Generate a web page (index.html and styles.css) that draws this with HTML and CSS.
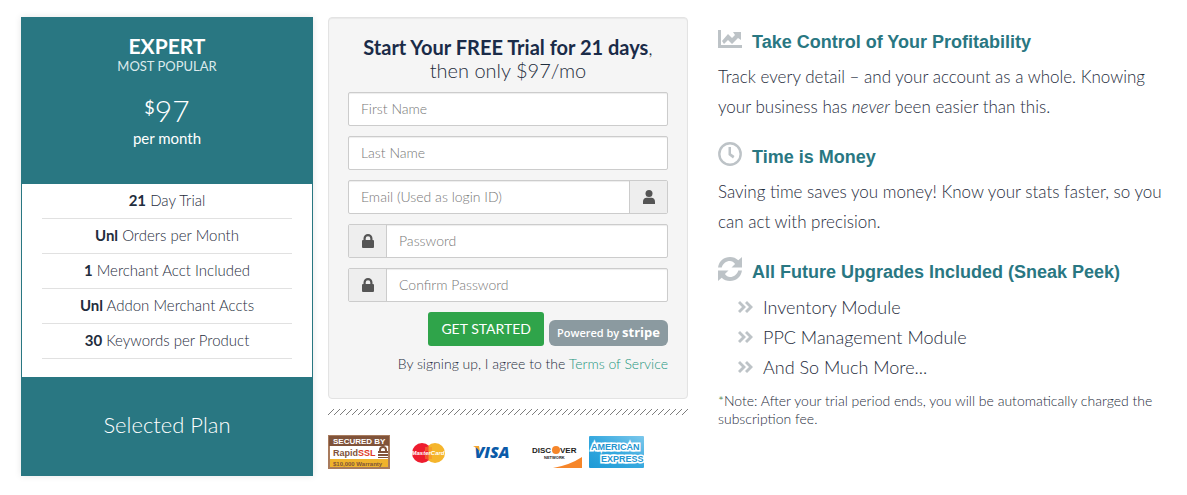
FILE: index.html
```html
<!DOCTYPE html>
<html lang="en">
<head>
  <meta charset="UTF-8" />
  <meta name="viewport" content="width=device-width, initial-scale=1.0" />
  <title>Start Your Free Trial</title>
  <link rel="stylesheet" href="styles.css">
</head>
<body>
  <main class="signup">

    <section class="plan">
      <div class="plan-header">
        <h2>EXPERT</h2>
        <p class="plan-tag">MOST POPULAR</p>
        <p class="plan-price"><sup>$</sup>97</p>
        <p class="plan-period">per month</p>
      </div>
      <ul class="plan-features">
        <li><strong>21</strong> Day Trial</li>
        <li><strong>Unl</strong> Orders per Month</li>
        <li><strong>1</strong> Merchant Acct Included</li>
        <li><strong>Unl</strong> Addon Merchant Accts</li>
        <li><strong>30</strong> Keywords per Product</li>
      </ul>
      <div class="plan-footer">Selected Plan</div>
    </section>

    <section class="middle">
      <form class="well">
        <h3><strong>Start Your FREE Trial for 21 days</strong>,<br>then only $97/mo</h3>
        <div class="field">
          <input type="text" placeholder="First Name" aria-label="First Name" />
        </div>
        <div class="field">
          <input type="text" placeholder="Last Name" aria-label="Last Name" />
        </div>
        <div class="field">
          <input type="email" id="email" placeholder="Email (Used as login ID)" aria-label="Email" />
          <label class="addon addon-right" for="email">
            <svg width="14" height="14" viewBox="0 0 14 14"><circle cx="7" cy="3.500" r="3.500"/><path d="M1 14V11.500C1 9.200 2.600 7.800 4.500 7.800H9.500C11.400 7.800 13 9.200 13 11.500V14Z"/></svg>
          </label>
        </div>
        <div class="field">
          <label class="addon addon-left" for="password">
            <svg width="14" height="14" viewBox="0 0 14 14"><path fill-rule="evenodd" d="M2.500 6V4.500a4.500 4.500 0 0 1 9 0V6h.5a1 1 0 0 1 1 1v6a1 1 0 0 1-1 1H2a1 1 0 0 1-1-1V7a1 1 0 0 1 1-1ZM4.700 6h4.600V4.500a2.300 2.300 0 0 0-4.600 0Z"/></svg>
          </label>
          <input type="password" id="password" placeholder="Password" aria-label="Password" />
        </div>
        <div class="field">
          <label class="addon addon-left" for="confirm">
            <svg width="14" height="14" viewBox="0 0 14 14"><path fill-rule="evenodd" d="M2.500 6V4.500a4.500 4.500 0 0 1 9 0V6h.5a1 1 0 0 1 1 1v6a1 1 0 0 1-1 1H2a1 1 0 0 1-1-1V7a1 1 0 0 1 1-1ZM4.700 6h4.600V4.500a2.300 2.300 0 0 0-4.600 0Z"/></svg>
          </label>
          <input type="password" id="confirm" placeholder="Confirm Password" aria-label="Confirm Password" />
        </div>
        <div class="actions">
          <button type="submit">GET STARTED</button>
          <span class="stripe">Powered by <b>stripe</b></span>
        </div>
        <p class="terms">By signing up, I agree to the <a href="#">Terms of Service</a></p>
      </form>

      <svg class="hatch" height="6" aria-hidden="true">
        <defs>
          <pattern id="slashes" width="6" height="6" patternUnits="userSpaceOnUse">
            <path d="M0 5h1v1H0zM1 4h1v1H1zM2 3h1v1H2zM3 2h1v1H3zM4 1h1v1H4zM5 0h1v1H5z" fill="#7d7d7d"/>
          </pattern>
        </defs>
        <rect width="100%" height="6" fill="url(#slashes)"/>
      </svg>

      <div class="badges">
        <!-- RapidSSL -->
        <svg width="62" height="34" viewBox="0 0 62 34">
          <rect x="1" y="1" width="60" height="32" fill="#fff" stroke="#a87b5d" stroke-width="2"/>
          <path d="M1 1h60v10q-4-1-5 0H1z" fill="#80533a"/>
          <rect x="2" y="24" width="58" height="8" fill="#efb32c"/>
          <text x="5" y="9" class="ssl-top">SECURED BY</text>
          <text x="5" y="21" class="ssl-name">Rapid<tspan fill="#e03a26">SSL</tspan></text>
          <path d="M52 17v-2a3 3 0 0 1 6 0v2" fill="none" stroke="#80533a" stroke-width="2"/>
          <path d="M50 16h10v2H50zM50 19h10v2H50zM50 22h10v1H50z" fill="#80533a"/>
          <text x="5" y="31" class="ssl-bottom">$10,000 Warranty</text>
        </svg>
        <!-- MasterCard -->
        <svg width="62" height="34" viewBox="0 0 62 34">
          <circle cx="30" cy="18" r="10" fill="#ee1c2e"/>
          <circle cx="43" cy="18" r="10" fill="#f5b52c"/>
          <path d="M36.500 10.400v15.200a10 10 0 0 1 0-15.200" fill="#ee1c2e"/>
          <path d="M33 13h7M33 15h7M33 21h7M33 23h7" stroke="#f5872c"/>
          <text x="36" y="20" class="mc">MasterCard</text>
        </svg>
        <!-- Visa -->
        <svg width="62" height="34" viewBox="0 0 62 34">
          <text x="36" y="23" class="visa">VISA</text>
          <path d="M17 11h6l1 6q-2-4-7-6" fill="#f5a52c"/>
        </svg>
        <!-- Discover -->
        <svg width="62" height="34" viewBox="0 0 62 34">
          <circle cx="36" cy="15" r="4" fill="#f6862a"/>
          <text x="12" y="18" class="disc">DISC</text>
          <text x="40" y="18" class="disc">VER</text>
          <text x="24" y="24" class="disc-sub">NETWORK</text>
          <path d="M33 33Q50 30 62 22v11z" fill="#f6862a"/>
        </svg>
        <!-- American Express -->
        <svg width="62" height="34" viewBox="0 0 62 34">
          <defs>
            <linearGradient id="amex" x1="0" y1="1" x2="1" y2="0">
              <stop offset="0" stop-color="#1d9ad6"/>
              <stop offset=".5" stop-color="#37a9df"/>
              <stop offset="1" stop-color="#7cc8ec"/>
            </linearGradient>
          </defs>
          <rect x="5" y="1" width="55" height="32" rx="1" fill="url(#amex)"/>
          <text x="7" y="15" class="amex">AMERICAN</text>
          <text x="17" y="27" class="amex">EXPRESS</text>
        </svg>
      </div>
    </section>

    <section class="benefits">
      <h4>
        <svg width="24" height="24" viewBox="0 0 24 24"><path d="M0 3h3v15h21v3H0z"/><path d="M4 14l6-7 4 4 3-3-2-3h8v8l-3-2-6 6-4-4-4 4z"/></svg>
        Take Control of Your Profitability
      </h4>
      <p>Track every detail – and your account as a whole. Knowing your business has <em>never</em> been easier than this.</p>

      <h4>
        <svg width="24" height="24" viewBox="0 0 24 24"><circle cx="12" cy="12" r="10.700" fill="none" stroke="#bdc3c7" stroke-width="2.400"/><path d="M10.500 5h2.500v6.500l3.500 2.500-1.500 2.500-4.500-3.500z"/></svg>
        Time is Money
      </h4>
      <p>Saving time saves you money! Know your stats faster, so you can act with precision.</p>

      <h4>
        <svg width="24" height="24" viewBox="0 0 24 24"><path d="M0 10.500C1 4 6 0 12 0c3.300 0 6.100 1.200 8.300 3.300L24 0v10.500H13.500l3.600-3.600C15.700 5 14 4 12 4c-4 0-7 2.500-8.300 6.500zM24 13.500C23 20 18 24 12 24c-3.300 0-6.100-1.200-8.300-3.300L0 24V13.500h10.500l-3.600 3.600C8.300 19 10 20 12 20c4 0 7-2.500 8.300-6.500z"/></svg>
        All Future Upgrades Included (Sneak Peek)
      </h4>
      <ul>
        <li><svg width="15" height="12" viewBox="0 0 15 12"><path d="M0 2l2-2 6 6-6 6-2-2 4-4zM7 2l2-2 6 6-6 6-2-2 4-4z"/></svg>Inventory Module</li>
        <li><svg width="15" height="12" viewBox="0 0 15 12"><path d="M0 2l2-2 6 6-6 6-2-2 4-4zM7 2l2-2 6 6-6 6-2-2 4-4z"/></svg>PPC Management Module</li>
        <li><svg width="15" height="12" viewBox="0 0 15 12"><path d="M0 2l2-2 6 6-6 6-2-2 4-4zM7 2l2-2 6 6-6 6-2-2 4-4z"/></svg>And So Much More...</li>
      </ul>
      <p class="note"><span>*</span>Note: After your trial period ends, you will be automatically charged the subscription fee.</p>
    </section>

  </main>
</body>
</html>
```
FILE: styles.css
```css
* { box-sizing: border-box; }
body {
  margin: 0;
  background: #fff;
  color: #1f2d3d;
  font-family: Lato, sans-serif;
  font-size: 14px;
  font-weight: 300;
}
h2, h3, h4, p, ul { margin: 0; padding: 0; }
ul { list-style: none; }
svg { display: block; flex: none; }

.signup {
  display: grid;
  grid-template-columns: 292fr 360fr 472fr;
  gap: 15px;
  align-items: start;
  padding: 17px 12px 19px 21px;
}

/* plan card */
.plan {
  background: #297782;
  text-align: center;
  box-shadow: 0 0 7px rgba(0, 0, 0, 0.1);
}
.plan-header {
  padding: 16px 0 36px;
  color: #fff;
}
.plan-header h2 {
  font-size: 21px;
  line-height: 26px;
  font-weight: 700;
}
.plan-tag {
  font-size: 13px;
  line-height: 15px;
  font-weight: 400;
  color: #dceaec;
}
.plan-price {
  margin-top: 18px;
  font-size: 30px;
  line-height: 36px;
}
.plan-price sup {
  font-size: 18px;
  line-height: 1;
  font-weight: 400;
  vertical-align: 8px;
}
.plan-period {
  line-height: 20px;
  font-size: 15px;
  font-weight: 400;
}
.plan-features {
  margin: 0 1px;
  padding: 0 20px 18px;
  background: #fff;
}
.plan-features li {
  padding-bottom: 2px;
  border-bottom: 1px solid #e1e1e1;
  font-size: 15px;
  line-height: 32px;
}
.plan-features strong { font-weight: 700; }
.plan-footer {
  padding-bottom: 3px;
  color: #fff;
  font-size: 22px;
  line-height: 96px;
}

/* trial form */
.well {
  padding: 18px 19px 24px;
  border: 1px solid #e3e3e3;
  border-radius: 4px;
  background: #f5f5f5;
  box-shadow: inset 0 1px 1px rgba(0, 0, 0, 0.05);
}
.well h3 {
  margin-bottom: 10px;
  font-size: 20px;
  line-height: 23px;
  font-weight: 300;
  text-align: center;
}
.well h3 strong { font-weight: 700; color: #1a2b48; }
.field {
  display: flex;
  margin-bottom: 10px;
  height: 34px;
  border: 1px solid #ccc;
  border-radius: 2px;
  background: #fff;
  box-shadow: inset 0 1px 1px rgba(0, 0, 0, 0.075);
}
.field input {
  flex: 1;
  min-width: 0;
  padding: 0 12px 2px;
  border: none;
  background: none;
  font: inherit;
  color: #555;
}
.field input::placeholder { color: #777; opacity: 1; }
.addon {
  display: flex;
  align-items: center;
  justify-content: center;
  width: 38px;
  background: #eee;
}
.addon svg { fill: #555; }
.addon-left { border-right: 1px solid #ccc; }
.addon-right { border-left: 1px solid #ccc; }
.actions {
  display: flex;
  justify-content: flex-end;
  align-items: flex-end;
  gap: 5px;
}
.actions button {
  height: 34px;
  padding: 0 13px 2px;
  border: none;
  border-radius: 3px;
  background: #2fa44a;
  color: #fff;
  font-family: inherit;
  font-size: 14px;
  font-weight: 400;
  cursor: pointer;
}
.stripe {
  padding: 0 8px;
  border-radius: 6px;
  background: #8b9aa0;
  color: #fff;
  font-family: "Open Sans", sans-serif;
  font-size: 11px;
  line-height: 26px;
  font-weight: 600;
}
.stripe b { font-size: 13px; line-height: 1; font-weight: 700; }
.terms {
  margin-top: 8px;
  line-height: 20px;
  text-align: right;
}
.terms a { color: #1e9580; text-decoration: none; }

.hatch {
  width: 100%;
  margin: 10px 0 20px;
}

/* payment and security badges */
.badges { display: flex; gap: 2px; }
.badges text { font-family: "Liberation Sans", sans-serif; font-weight: 700; }
.badges .ssl-top { font-size: 8px; fill: #fff; }
.badges .ssl-name { font-size: 9px; fill: #80533a; }
.badges .ssl-bottom { font-size: 6px; fill: #80533a; }
.badges .mc { font-size: 6px; font-style: italic; fill: #fff; text-anchor: middle; }
.badges .visa {
  font-family: "Open Sans", sans-serif;
  font-size: 16px;
  font-style: italic;
  font-weight: 800;
  fill: #0a5aa8;
  text-anchor: middle;
}
.badges .disc { font-size: 8px; fill: #1d1d1b; }
.badges .disc-sub { font-size: 4px; fill: #1d1d1b; }
.badges .amex {
  font-size: 9px;
  fill: #2394cf;
  stroke: #fff;
  stroke-width: 3px;
  paint-order: stroke;
}

/* benefits */
.benefits { padding: 10px 0 0 15px; }
.benefits svg { fill: #bdc3c7; }
.benefits h4 {
  display: flex;
  align-items: flex-start;
  gap: 10px;
  margin-bottom: 5px;
  color: #297782;
  font-family: "Liberation Sans", sans-serif;
  font-size: 18px;
  line-height: 30px;
  font-weight: 700;
}
.benefits p {
  margin-bottom: 20px;
  font-size: 17px;
  line-height: 30px;
}
.benefits li {
  display: flex;
  align-items: center;
  gap: 10px;
  padding-left: 20px;
  font-size: 18px;
  line-height: 30px;
}
.benefits .note {
  margin: 10px 0 0;
  font-size: 14px;
  line-height: 18px;
}
.note span { color: #3c763d; }
```
